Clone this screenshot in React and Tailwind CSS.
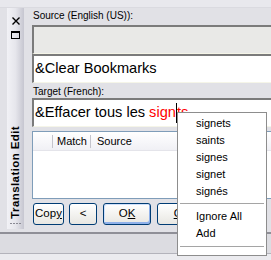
import React from "react";

function SidePanel() {
  return (
    <div className="w-[17px] h-[221px] shrink-0 flex flex-col items-center bg-linear-to-r from-[#f2f2f6] via-[#e6e6ec] to-[#c6c6d0]">
      <svg width="8" height="8" viewBox="0 0 8 8" className="mt-[9px]">
        <path d="M0.5 0.5 L7.5 7.5 M7.5 0.5 L0.5 7.5" stroke="#000" strokeWidth="1.4" />
      </svg>
      <div className="mt-[6px] w-[9px] h-[8px] border border-black border-t-2" />
      <div className="flex-1" />
      <div className="[writing-mode:vertical-rl] rotate-180 text-[11.5px] font-bold tracking-[0.4px] leading-[17px]">
        Translation Edit
      </div>
      <div className="mt-[4px] mb-[5px] flex gap-[1px]">
        <div className="w-[2px] h-[1px] bg-[#8a8a94]" />
        <div className="w-[2px] h-[1px] bg-[#8a8a94]" />
        <div className="w-[2px] h-[1px] bg-[#8a8a94]" />
        <div className="w-[2px] h-[1px] bg-[#8a8a94]" />
      </div>
    </div>
  );
}

function Btn({ children, className = "" }) {
  return (
    <div
      className={
        "h-[22px] shrink-0 flex items-center justify-center rounded-[3px] border border-[#003c74] bg-linear-to-b from-white to-[#e8e7e2] text-[11.5px] " +
        className
      }
    >
      {children}
    </div>
  );
}

const sunken =
  "h-[29px] border-t-2 border-l-2 border-t-[#7b7b7b] border-l-[#7b7b7b] border-b border-r border-b-[#f5f5e8] border-r-[#f5f5e8]";

export default function App() {
  return (
    <div className="relative w-[271px] h-[260px] overflow-hidden flex flex-col bg-[#e1e1e6] font-['Liberation_Sans',Arial,sans-serif] text-black">
      <div className="h-[8px] shrink-0 bg-[#e8e8ed] border-b border-[#dadae0]" />
      <div className="flex h-[224px] shrink-0">
        <div className="w-[7px] shrink-0" />
        <SidePanel />
        <div className="ml-[8px] w-[250px] shrink-0 flex flex-col">
          <div className="h-[17px] text-[10px] leading-[16px] pl-[1px]">Source (English (US)):</div>
          <div className={sunken + " bg-[#e9e9e7]"} />
          <div className={sunken + " bg-white flex items-center pl-[1px] text-[14.6px]"}>&amp;Clear Bookmarks</div>
          <div className="h-[15px] text-[10px] leading-[15px] pl-[1px] pt-[1px]">Target (French):</div>
          <div className={sunken + " bg-white flex items-center pl-[1px] text-[14.6px] whitespace-pre"}>
            <span>&amp;Effacer tous les </span>
            <span className="text-[#ff0000]">sign</span>
            <span className="inline-block w-px h-[20px] bg-black" />
            <span className="text-[#ff0000]">ts</span>
          </div>
          <div className="mt-[4px] h-[68px] border border-[#7f9db9] bg-white flex flex-col">
            <div className="h-[19px] flex items-center bg-linear-to-b from-white to-[#f0f0f5] border-b border-[#e4e4ea] text-[11px]">
              <div className="w-[19px] h-full" />
              <div className="w-px h-[13px] bg-[#c4c4cc]" />
              <div className="w-[37px] pl-[4px]">Match</div>
              <div className="w-px h-[13px] bg-[#c4c4cc]" />
              <div className="pl-[6px]">Source</div>
            </div>
          </div>
          <div className="mt-[4px] flex">
            <Btn className="ml-[1px] w-[31px]">
              Cop<u>y</u>
            </Btn>
            <Btn className="ml-[5px] w-[28px]">&lt;</Btn>
            <Btn className="ml-[6px] w-[48px] shadow-[inset_-1px_-2px_0_#8fb1ea,inset_1px_1px_0_#cfe0fb]">
              O<u>K</u>
            </Btn>
            <Btn className="ml-[6px] w-[48px]">
              <u>O</u>k
            </Btn>
          </div>
        </div>
      </div>
      <div className="h-[2px] shrink-0 bg-[#8f8f97]" />
      <div className="h-[19px] shrink-0 bg-[#dcdce1]" />
      <div className="h-px shrink-0 bg-[#b3b3bb]" />
      <div className="flex-1 bg-[#ebebef]" />

      <div className="absolute left-[177px] top-[112px] w-[90px] h-[144px] border border-[#8d8d8d] bg-white pt-[2px] text-[11px]">
        {["signets", "saints", "signes", "signet", "signés"].map((w) => (
          <div key={w} className="h-[17px] leading-[17px] pl-[18px]">
            {w}
          </div>
        ))}
        <div className="h-[8px] pt-[3px] px-[2px]">
          <div className="h-px bg-[#a5a5a5]" />
        </div>
        <div className="h-[17px] leading-[17px] pl-[18px]">Ignore All</div>
        <div className="h-[17px] leading-[17px] pl-[18px]">Add</div>
        <div className="pt-[4px] px-[2px]">
          <div className="h-px bg-[#a5a5a5]" />
        </div>
      </div>
    </div>
  );
}
